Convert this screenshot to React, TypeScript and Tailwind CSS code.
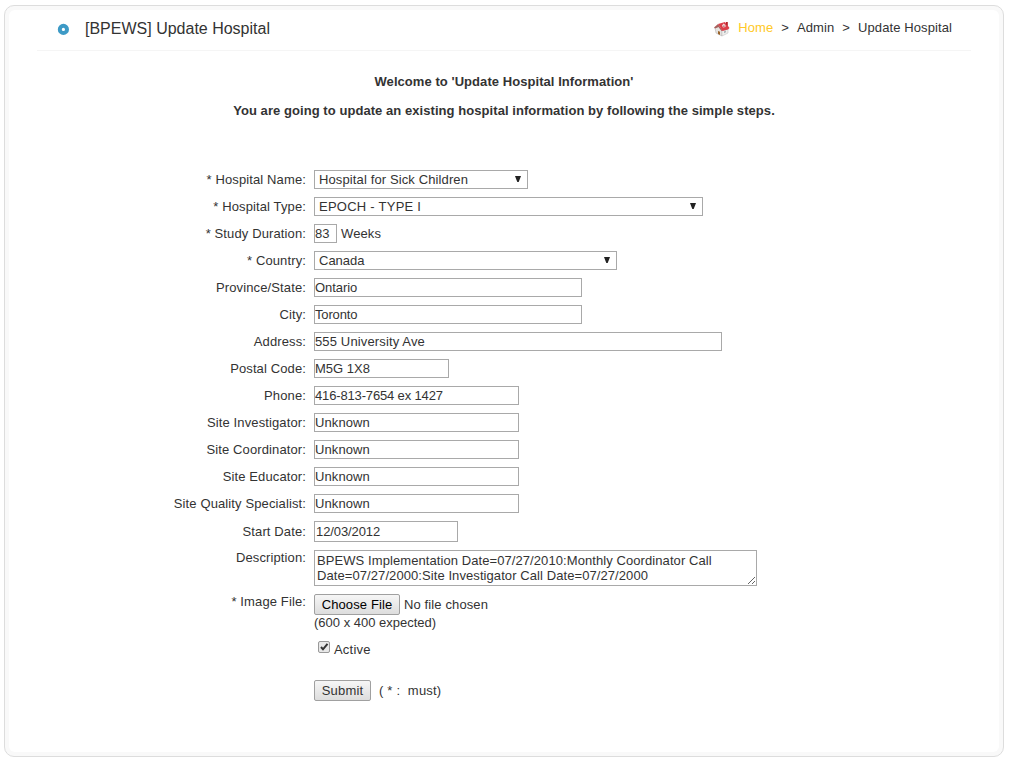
import type { ReactNode } from "react";

function Row({ label, children, className = "h-[19px] mb-2", labelClass = "leading-[19px]" }: { label: string; children: ReactNode; className?: string; labelClass?: string }) {
  return (
    <div className={`flex ${className}`}>
      <div className={`w-[305px] shrink-0 pr-2 text-right whitespace-pre ${labelClass}`}>{label}</div>
      <div className="flex items-start">{children}</div>
    </div>
  );
}

function Field({ value, className }: { value: string; className: string }) {
  return (
    <input
      defaultValue={value}
      className={`block h-[19px] border border-[#a9a9a9] bg-white px-0 outline-none ${className}`}
    />
  );
}

function Select({ value, className }: { value: string; className: string }) {
  return (
    <div className={`flex h-[19px] justify-between border border-[#a9a9a9] bg-white pr-[6px] pl-1 leading-[17px] ${className}`}>
      <span>{value}</span>
      <svg className="mt-[5px] h-[6px] w-[6px]" viewBox="0 0 6 6">
        <path d="M0 0h6L3.700 6H2.300z" fill="#222" />
      </svg>
    </div>
  );
}

function HomeIcon() {
  return (
    <svg className="mt-[6px] h-4 w-4" viewBox="0 0 16 16">
      <path d="M1 7l3.500-1.500L8 9.500V15l-6-3z" fill="#e6e3e0" stroke="#aaa" strokeWidth=".5" />
      <path d="M8 9.500l6-2V12l-6 3z" fill="#f0efed" stroke="#bbb" strokeWidth=".5" />
      <path d="M0 6.500L4 3l4.500 6.500-1 .5L4.500 6 1 7.500z" fill="#a8605c" />
      <path d="M4 3l7-2 4.500 6-1.500 1.500-5.500 1.500z" fill="#dc3f4a" />
      <path d="M12 1h1.800v4L12 3.500z" fill="#b32028" />
      <path d="M8 4.500l1.500-2 2 1.500v2L9 6.500z" fill="#f3dede" />
      <path d="M9.300 4.500h1.200v1.500H9.300z" fill="#a66" />
      <path d="M4 10l2 .7v3.300l-2-1z" fill="#9b642a" />
      <path d="M10 10.300l2-.8v1.800l-2 .9z" fill="#aab4b8" />
    </svg>
  );
}

export default function App() {
  return (
    <div className="h-[761px] w-[1011px] bg-white pt-[5px] pl-1 font-['Liberation_Sans',Arial,sans-serif] text-[13px] tracking-[0.12px] text-[#333]">
      <div className="h-[752px] w-[1000px] rounded-[10px] border border-[#ddd] bg-[#f9f9f9] p-1">
        <div className="h-full rounded-[6px] bg-white">
          <header className="mx-[28px] flex h-[41px] justify-between border-b border-[#f5f5f5] pr-[19px] pl-5">
            <div className="flex">
              <svg className="mt-[13px] h-3 w-3" viewBox="0 0 12 12">
                <circle cx="6.400" cy="6.400" r="3.600" fill="white" stroke="#3d9ac6" strokeWidth="4" />
              </svg>
              <h1 className="ml-4 text-[16px] leading-[37px] tracking-normal">[BPEWS] Update Hospital</h1>
            </div>
            <nav className="flex pt-[5px] leading-[26px] tracking-[0.1px]">
              <HomeIcon />
              <span className="ml-2 text-[#ffc926]">Home</span>
              <span className="ml-2">&gt;</span>
              <span className="ml-2">Admin</span>
              <span className="ml-2">&gt;</span>
              <span className="ml-2">Update Hospital</span>
            </nav>
          </header>
          <div className="h-[119px] pt-[16px] text-center leading-[29px] font-bold tracking-[0.06px]">
            <p>Welcome to 'Update Hospital Information'</p>
            <p>You are going to update an existing hospital information by following the simple steps.</p>
          </div>
          <form>
            <Row label="* Hospital Name:"><Select value="Hospital for Sick Children" className="w-[214px]" /></Row>
            <Row label="* Hospital Type:"><Select value="EPOCH - TYPE I" className="w-[389px] tracking-[0.25px]" /></Row>
            <Row label="* Study Duration:">
              <Field value="83" className="w-[23px] tracking-[-0.1px]" />
              <span className="ml-1 leading-[19px]">Weeks</span>
            </Row>
            <Row label="* Country:"><Select value="Canada" className="w-[303px] tracking-normal" /></Row>
            <Row label="Province/State:"><Field value="Ontario" className="w-[268px] tracking-[-0.05px]" /></Row>
            <Row label="City:"><Field value="Toronto" className="w-[268px] tracking-[-0.15px]" /></Row>
            <Row label="Address:"><Field value="555 University Ave" className="w-[408px] tracking-[0.14px]" /></Row>
            <Row label="Postal Code:"><Field value="M5G 1X8" className="w-[135px] tracking-normal" /></Row>
            <Row label="Phone:"><Field value="416-813-7654 ex 1427" className="w-[205px] tracking-[-0.15px]" /></Row>
            <Row label="Site Investigator:"><Field value="Unknown" className="w-[205px] tracking-[0.1px]" /></Row>
            <Row label="Site Coordinator:"><Field value="Unknown" className="w-[205px] tracking-[0.1px]" /></Row>
            <Row label="Site Educator:"><Field value="Unknown" className="w-[205px] tracking-[0.1px]" /></Row>
            <Row label="Site Quality Specialist:"><Field value="Unknown" className="w-[205px] tracking-[0.1px]" /></Row>
            <Row label="Start Date:" className="h-[21px] mb-2" labelClass="leading-[21px]">
              <div className="h-[21px] w-[144px] border border-[#a9a9a9] pl-px leading-[19px] tracking-[-0.1px]">12/03/2012</div>
            </Row>
            <Row label="Description:" className="h-9 mb-2" labelClass="leading-[15px]">
              <textarea
                className="block h-9 w-[443px] border border-[#a9a9a9] bg-white px-[2px] pt-[2px] leading-[15px] tracking-[0.08px] outline-none"
                defaultValue="BPEWS Implementation Date=07/27/2010:Monthly Coordinator Call Date=07/27/2000:Site Investigator Call Date=07/27/2000"
              />
            </Row>
            <Row label="* Image File:" className="h-[47px]" labelClass="leading-[15px]">
              <div>
                <div className="flex">
                  <button type="button" className="h-[21px] w-[86px] rounded-[2px] border border-[#a0a0a0] bg-linear-to-b from-[#f6f6f6] to-[#dddddd] leading-[19px] tracking-[0.12px] text-black">Choose File</button>
                  <span className="ml-1 leading-[21px]">No file chosen</span>
                </div>
                <div className="leading-[15px] tracking-normal">(600 x 400 expected)</div>
              </div>
            </Row>
            <Row label="" className="h-[39px]">
              <svg className="ml-[4px] h-3 w-3" viewBox="0 0 12 12">
                <rect x=".5" y=".5" width="11" height="11" rx="1.500" fill="#e8e8e8" stroke="#999" />
                <path d="M3 6l2 2.300L9.500 2.800" fill="none" stroke="#333" strokeWidth="2" />
              </svg>
              <span className="ml-1 leading-[17px] tracking-[0.2px]">Active</span>
            </Row>
            <Row label="" className="h-[21px]">
              <button type="button" className="h-[21px] w-[57px] rounded-[2px] border border-[#a0a0a0] bg-linear-to-b from-[#f6f6f6] to-[#dddddd] leading-[19px] tracking-[0.2px]">Submit</button>
              <span className="ml-2 leading-[21px] tracking-[0.2px] whitespace-pre">( * :  must)</span>
            </Row>
          </form>
        </div>
      </div>
    </div>
  );
}
